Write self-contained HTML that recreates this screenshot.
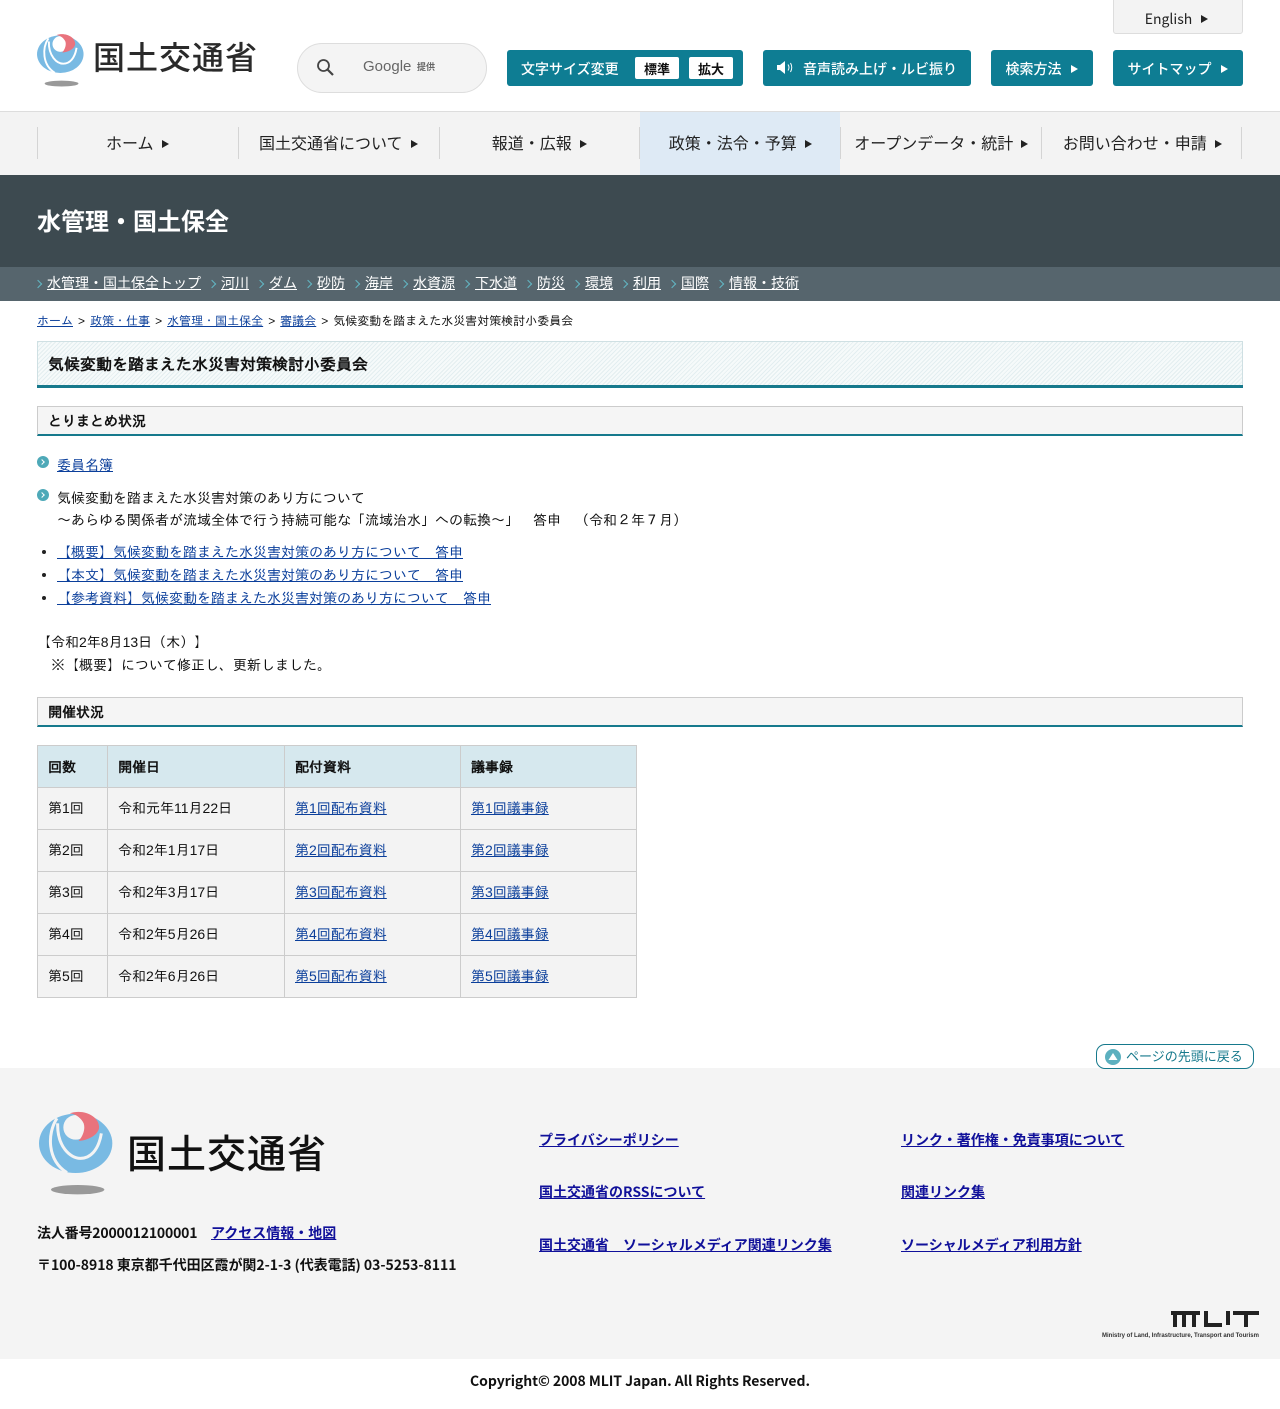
<!DOCTYPE html>
<html lang="ja"><head><meta charset="utf-8"><title>気候変動を踏まえた水災害対策検討小委員会</title>
<style>
html,body{margin:0;padding:0;background:#fff}
#p{position:relative;width:1280px;height:1409px;overflow:hidden;font-family:"Liberation Sans","IPAGothic",sans-serif;font-size:14px;color:#111}
#p div,#p a.t,#p span.t{position:absolute;white-space:nowrap}
.n{font-family:"Noto Sans CJK JP",sans-serif}
a{color:#0b3f9b}
.btn{background:#0e7d93;border-radius:3px;height:36px;top:50px;color:#fff;font-family:"Noto Sans CJK JP",sans-serif;font-size:14px;line-height:38px;font-weight:500}
.tri{display:inline-block;width:0;height:0;border-left:7px solid currentColor;border-top:4.5px solid transparent;border-bottom:4.5px solid transparent;margin-left:9px;vertical-align:1px}
.sz{background:#fff;color:#111;border-radius:2px;height:22px;line-height:22px;top:7px;text-align:center;font-size:13px}
.nv{top:112px;height:62px;line-height:60px;text-align:center;font-family:"Noto Sans CJK JP",sans-serif;font-size:16px;color:#222;text-indent:.5px}
.sp{width:1px;height:32px;top:127px;background:#d4d4d4}
.sub a{color:#fff;position:absolute;top:0;line-height:34px}
.sub i{position:absolute;top:14px;width:5px;height:5px;border-top:1px solid #62b7c4;border-right:1px solid #62b7c4;transform:rotate(45deg)}
.h2{left:37px;width:1204px;height:27px;background:#f5f5f5;border:1px solid #ccc;border-bottom:2px solid #16798c;font-weight:bold;line-height:28px;text-indent:10px;font-size:14px;color:#111}
.bl{width:12px;height:12px;border-radius:50%;background:#4ea9b8;left:37px}
.bl:after{content:"";position:absolute;left:3px;top:4px;width:3px;height:3px;border-top:1px solid #fff;border-right:1px solid #fff;transform:rotate(45deg)}
.d{width:4px;height:4px;border-radius:50%;background:#222;left:42px}
table{position:absolute;left:37px;top:745px;border-collapse:collapse;table-layout:fixed;width:600px;font-size:14px}
td{border:1px solid #ccc;height:39px;padding:0 0 2px 10px;text-align:left;background:#f3f3f3;color:#111}
th{border:1px solid #ccc;height:41px;padding:0 0 0 10px;text-align:left;background:#d6e8ee;color:#111}
.f a{color:#10109a;font-family:"Noto Sans CJK JP",sans-serif;font-weight:700;font-size:14px;position:absolute;line-height:20px;white-space:nowrap}
</style></head><body><div id="p">

<!-- header -->
<svg style="position:absolute;left:37px;top:33px" width="47" height="55" viewBox="116 60 222 260">
<ellipse cx="232" cy="299" rx="80" ry="14" fill="#999"/>
<ellipse cx="226" cy="160" rx="110" ry="89" fill="#79bae3"/>
<path d="M170 85C140 130 140 210 200 248" fill="none" stroke="#fff" stroke-width="9"/>
<path d="M172 100C170 170 210 205 240 205C270 205 295 180 303 130" fill="none" stroke="#fff" stroke-width="9"/>
<circle cx="226" cy="112" r="37" fill="#fff"/>
<path d="M208 70C250 55 300 80 296 115C292 135 265 150 235 153C250 135 255 115 250 100C243 85 228 72 208 70Z" fill="#e9737d"/>
</svg>
<div class="n" style="left:93px;top:34px;font-size:32px;line-height:44px;color:#2a2a2a;font-weight:500;letter-spacing:1px">国土交通省</div>

<div style="left:297px;top:43px;width:188px;height:48px;border:1px solid #ddd;border-radius:25px;background:#f4f4f4"></div>
<svg style="position:absolute;left:315px;top:57px" width="20" height="20" viewBox="0 0 20 20"><circle cx="8.500" cy="8.500" r="5.500" fill="none" stroke="#444" stroke-width="1.800"/><path d="M12.500 12.500L18 18" stroke="#444" stroke-width="2.200"/></svg>
<div style="left:363px;top:57px;font-family:'Liberation Sans',sans-serif;font-size:15px;line-height:20px;color:#666">Google</div>
<div class="n" style="left:417px;top:59px;font-size:9px;line-height:16px;color:#666;font-weight:bold">提供</div>

<div style="left:1113px;top:-4px;width:128px;height:36px;background:#f3f3f3;border:1px solid #ddd;border-radius:3px;text-align:center;line-height:44px;font-family:'Noto Sans CJK JP',sans-serif;font-size:14px;color:#222;text-indent:-3px">English<span class="tri" style="margin-left:9px"></span></div>

<div class="btn" style="left:507px;width:236px"><span style="position:absolute;left:14px">文字サイズ変更</span></div>
<div class="btn sz" style="left:635px;top:57px;width:44px;height:22px;line-height:24px;background:#fff;color:#111;font-weight:700">標準</div>
<div class="btn sz" style="left:689px;top:57px;width:44px;height:22px;line-height:24px;background:#fff;color:#111;font-weight:700">拡大</div>
<div class="btn" style="left:763px;width:208px"><span style="position:absolute;left:40px">音声読み上げ・ルビ振り</span></div>
<svg style="position:absolute;left:776px;top:60px" width="20" height="16" viewBox="0 0 20 16"><path d="M1 5h3l5-4v13l-5-4H1z" fill="#fff"/><path d="M12 4.500Q14 7.500 12 10.500M14.500 3Q17 7.500 14.500 12" fill="none" stroke="#fff" stroke-width="1"/></svg>
<div class="btn" style="left:991px;width:102px;text-align:center;text-indent:-1px">検索方法<span class="tri"></span></div>
<div class="btn" style="left:1113px;width:130px;text-align:center;text-indent:-1px">サイトマップ<span class="tri"></span></div>

<!-- nav -->
<div style="left:0;top:111px;width:1280px;height:64px;background:#f3f3f3;border-top:1px solid #ddd;box-sizing:border-box"></div>
<div style="left:640px;top:112px;width:200px;height:63px;background:#deeaf5"></div>
<div class="sp" style="left:37px"></div><div class="sp" style="left:238px"></div><div class="sp" style="left:439px"></div><div class="sp" style="left:639px"></div><div class="sp" style="left:840px"></div><div class="sp" style="left:1041px"></div><div class="sp" style="left:1241px"></div>
<div class="nv" style="left:37px;width:200px">ホーム<span class="tri" style="margin-left:8px"></span></div>
<div class="nv" style="left:238px;width:200px">国土交通省について<span class="tri" style="margin-left:8px"></span></div>
<div class="nv" style="left:439px;width:200px">報道・広報<span class="tri" style="margin-left:8px"></span></div>
<div class="nv" style="left:640px;width:200px">政策・法令・予算<span class="tri" style="margin-left:8px"></span></div>
<div class="nv" style="left:841px;width:200px">オープンデータ・統計<span class="tri" style="margin-left:8px"></span></div>
<div class="nv" style="left:1042px;width:200px">お問い合わせ・申請<span class="tri" style="margin-left:8px"></span></div>

<!-- title band -->
<div style="left:0;top:175px;width:1280px;height:92px;background:#3d4a50"></div>
<div class="n" style="left:37px;top:202px;font-size:24px;line-height:36px;font-weight:700;color:#fff">水管理・国土保全</div>
<div class="sub n" style="left:0;top:267px;width:1280px;height:34px;background:#56656d;font-size:14px;line-height:34px">
<i style="left:35px"></i><a href="#" style="left:47px;top:-1px">水管理・国土保全トップ</a>
<i style="left:209px"></i><a href="#" style="left:221px;top:-1px">河川</a>
<i style="left:257px"></i><a href="#" style="left:269px;top:-1px">ダム</a>
<i style="left:305px"></i><a href="#" style="left:317px;top:-1px">砂防</a>
<i style="left:353px"></i><a href="#" style="left:365px;top:-1px">海岸</a>
<i style="left:401px"></i><a href="#" style="left:413px;top:-1px">水資源</a>
<i style="left:463px"></i><a href="#" style="left:475px;top:-1px">下水道</a>
<i style="left:525px"></i><a href="#" style="left:537px;top:-1px">防災</a>
<i style="left:573px"></i><a href="#" style="left:585px;top:-1px">環境</a>
<i style="left:621px"></i><a href="#" style="left:633px;top:-1px">利用</a>
<i style="left:669px"></i><a href="#" style="left:681px;top:-1px">国際</a>
<i style="left:717px"></i><a href="#" style="left:729px;top:-1px">情報・技術</a>
</div>

<!-- breadcrumbs -->
<div style="left:37px;top:312px;font-size:12px;line-height:18px;word-spacing:1.700px"><a href="#">ホーム</a> &gt; <a href="#">政策・仕事</a> &gt; <a href="#">水管理・国土保全</a> &gt; <a href="#">審議会</a> &gt; 気候変動を踏まえた水災害対策検討小委員会</div>

<!-- h1 -->
<div style="left:37px;top:341px;width:1204px;height:43px;border:1px solid #cfe0e3;border-bottom:0;background:repeating-linear-gradient(135deg,#e3eef0 0 1px,#f6fafa 1px 3px)"></div>
<div style="left:37px;top:385px;width:1206px;height:3px;background:#16798c"></div>
<div style="left:48px;top:354px;font-size:16px;line-height:24px;font-weight:bold;color:#111">気候変動を踏まえた水災害対策検討小委員会</div>

<div class="h2" style="top:406px">とりまとめ状況</div>

<div class="bl" style="top:456px"></div>
<div style="left:57px;top:455px;line-height:20px"><a href="#">委員名簿</a></div>
<div class="bl" style="top:489px"></div>
<div style="left:57px;top:488px;line-height:20px">気候変動を踏まえた水災害対策のあり方について</div>
<div style="left:57px;top:510px;line-height:20px">～あらゆる関係者が流域全体で行う持続可能な「流域治水」への転換～」　答申　（令和２年７月）</div>

<div class="d" style="top:550px"></div><div style="left:57px;top:542px;line-height:20px"><a href="#">【概要】気候変動を踏まえた水災害対策のあり方について　答申</a></div>
<div class="d" style="top:573px"></div><div style="left:57px;top:565px;line-height:20px"><a href="#">【本文】気候変動を踏まえた水災害対策のあり方について　答申</a></div>
<div class="d" style="top:596px"></div><div style="left:57px;top:588px;line-height:20px"><a href="#">【参考資料】気候変動を踏まえた水災害対策のあり方について　答申</a></div>

<div style="left:37px;top:632px;line-height:20px">【令和2年8月13日（木）】</div>
<div style="left:51px;top:655px;line-height:20px">※【概要】について修正し、更新しました。</div>

<div class="h2" style="top:697px">開催状況</div>

<table><colgroup><col style="width:70px"><col style="width:177px"><col style="width:176px"><col style="width:176px"></colgroup>
<tr><th>回数</th><th>開催日</th><th>配付資料</th><th>議事録</th></tr>
<tr><td>第1回</td><td>令和元年11月22日</td><td><a href="#">第1回配布資料</a></td><td><a href="#">第1回議事録</a></td></tr>
<tr><td>第2回</td><td>令和2年1月17日</td><td><a href="#">第2回配布資料</a></td><td><a href="#">第2回議事録</a></td></tr>
<tr><td>第3回</td><td>令和2年3月17日</td><td><a href="#">第3回配布資料</a></td><td><a href="#">第3回議事録</a></td></tr>
<tr><td>第4回</td><td>令和2年5月26日</td><td><a href="#">第4回配布資料</a></td><td><a href="#">第4回議事録</a></td></tr>
<tr><td>第5回</td><td>令和2年6月26日</td><td><a href="#">第5回配布資料</a></td><td><a href="#">第5回議事録</a></td></tr>
</table>

<!-- footer -->
<div style="left:0;top:1068px;width:1280px;height:291px;background:#f4f4f4"></div>
<div style="left:1096px;top:1044px;width:156px;height:23px;border:1px solid #16798c;border-radius:9px;background:#fff"></div>
<svg style="position:absolute;left:1105px;top:1049px" width="16" height="16" viewBox="0 0 16 16"><circle cx="8" cy="8" r="8" fill="#5cb0bf"/><path d="M8 4l4.500 7h-9z" fill="#fff"/></svg>
<div class="n" style="left:1126px;top:1046px;font-size:13px;line-height:20px;color:#16798c">ページの先頭に戻る</div>

<svg style="position:absolute;left:38.700px;top:1110px" width="74" height="86.700" viewBox="116 60 222 260">
<ellipse cx="232" cy="299" rx="80" ry="14" fill="#999"/>
<ellipse cx="226" cy="160" rx="110" ry="89" fill="#79bae3"/>
<path d="M170 85C140 130 140 210 200 248" fill="none" stroke="#f4f4f4" stroke-width="9"/>
<path d="M172 100C170 170 210 205 240 205C270 205 295 180 303 130" fill="none" stroke="#f4f4f4" stroke-width="9"/>
<circle cx="226" cy="112" r="37" fill="#f4f4f4"/>
<path d="M208 70C250 55 300 80 296 115C292 135 265 150 235 153C250 135 255 115 250 100C243 85 228 72 208 70Z" fill="#e9737d"/>
</svg>
<div class="n" style="left:127px;top:1127px;font-size:39px;line-height:50px;color:#111;font-weight:500;letter-spacing:1px">国土交通省</div>

<div class="n f" style="left:37px;top:1223px;font-size:14px;line-height:20px;font-weight:700;color:#111;letter-spacing:-.18px">法人番号2000012100001<a href="#" style="left:174px;top:0;letter-spacing:0">アクセス情報・地図</a></div>
<div class="n" style="left:37px;top:1255px;font-size:14px;line-height:20px;font-weight:700;color:#111;letter-spacing:-.04px">〒100-8918 東京都千代田区霞が関2-1-3 (代表電話) 03-5253-8111</div>

<div class="f" style="left:0;top:0">
<a href="#" style="left:539px;top:1130px">プライバシーポリシー</a>
<a href="#" style="left:901px;top:1130px">リンク・著作権・免責事項について</a>
<a href="#" style="left:539px;top:1182px">国土交通省のRSSについて</a>
<a href="#" style="left:901px;top:1182px">関連リンク集</a>
<a href="#" style="left:539px;top:1235px">国土交通省　ソーシャルメディア関連リンク集</a>
<a href="#" style="left:901px;top:1235px">ソーシャルメディア利用方針</a>
</div>

<svg style="position:absolute;left:1170px;top:1310px" width="90" height="18" viewBox="0 0 90 18"><path d="M1 3H30M5 3V17M14 3V17M24 3V17M36 1V15H52M58 1V15M63 3H89M76 3V17" fill="none" stroke="#222" stroke-width="4"/></svg>
<div style="left:1102px;top:1331px;font-family:'Liberation Sans',sans-serif;font-size:6px;line-height:10px;font-weight:bold;color:#333">Ministry of Land, Infrastructure, Transport and Tourism</div>

<div class="n" style="left:0;top:1370px;width:1280px;text-align:center;font-size:14px;line-height:22px;font-weight:700;color:#111;letter-spacing:-.06px">Copyright© 2008 MLIT Japan. All Rights Reserved.</div>
</div></body></html>
